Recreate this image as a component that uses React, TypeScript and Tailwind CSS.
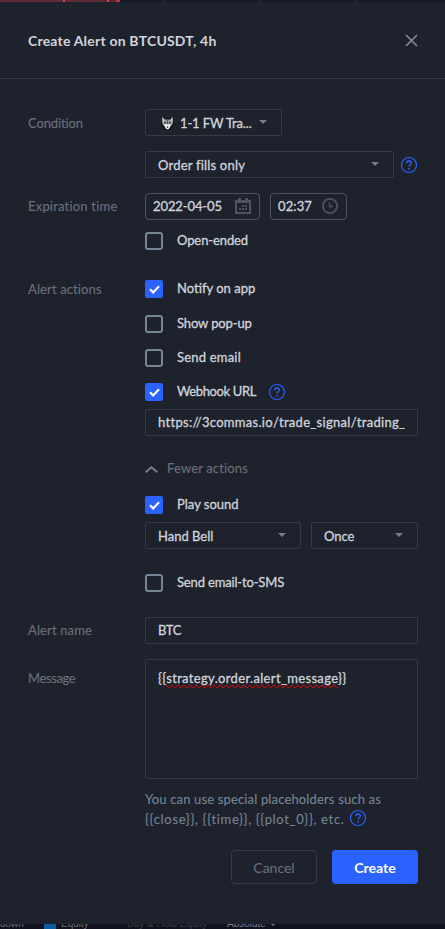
import type { ReactNode } from "react";

function Help({ className = "" }: { className?: string }) {
  return (
    <svg className={`h-4 w-4 shrink-0 overflow-visible ${className}`} viewBox="0 0 16 16" fill="none" stroke="#2962ff">
      <circle cx="8" cy="8" r="7.5" strokeWidth="1.2" />
      <path d="M5.6 6.3C5.6 4.9 6.6 4 8 4s2.4.9 2.4 2.1C10.4 7.7 8 7.8 8 9.7" strokeWidth="1.3" />
      <path d="M8 11v1.5" strokeWidth="1.6" />
    </svg>
  );
}

function Caret({ className = "" }: { className?: string }) {
  return (
    <svg className={`ml-auto h-1 w-2 shrink-0 ${className}`} viewBox="0 0 8 4">
      <path d="M0 0h8L4 4z" fill="#787b86" />
    </svg>
  );
}

function Check({ on = false, className = "", children }: { on?: boolean; className?: string; children: ReactNode }) {
  return (
    <div className={`flex h-[18px] items-center ${className}`}>
      {on ? (
        <span className="flex h-[18px] w-[18px] shrink-0 items-center justify-center rounded-[2px] bg-[#2962ff]">
          <svg className="h-[9px] w-[11px]" viewBox="0 0 11 9" fill="none" stroke="#fff" strokeWidth="2.2">
            <path d="M1 4.2l3.2 3.2L10 1.2" />
          </svg>
        </span>
      ) : (
        <span className="h-[18px] w-[18px] shrink-0 rounded-[3px] border-2 border-[#758696]" />
      )}
      <span className="ml-[14px] flex items-center whitespace-nowrap">{children}</span>
    </div>
  );
}

function Row({ label, className = "", children }: { label?: ReactNode; className?: string; children: ReactNode }) {
  return (
    <div className={`flex ${className}`}>
      <div className="w-[117px] shrink-0 leading-[27px] text-[#6c707b] [-webkit-text-stroke:0.1px]">{label}</div>
      <div className="w-[273px] shrink-0">{children}</div>
    </div>
  );
}

function Wolf() {
  return (
    <svg className="-mt-px mr-[6px] h-[14px] w-[13px] shrink-0" viewBox="0 0 13 14">
      <path d="M.6 0L4.200 2.600h4.600L12.400 0l.6 5-.4 3 .4 1.500-2.600 1.500-1.600 3H4.200L2.600 11 0 9.500 .4 8 0 5z" fill="#08090c" />
      <path d="M1 .6L4 3.600h5L12 .6l.2 4.900-.8 3.300L8.500 10h-4L1.600 8.800.8 5.500z" fill="#97999c" />
      <path d="M1.800 2.200l1.700 2L2.300 5.800zM11.200 2.200l-1.700 2 1.200 1.600z" fill="#e0d4d4" />
      <path d="M6 4h1v4H6z" fill="#5c5e62" />
      <path d="M2.500 9L5 8l1.500.7L8 8l2.500 1L9 11l-1.200 2.300H5.200L4 11z" fill="#f2f2f4" />
      <path d="M3.300 6l2 .6-.3 1-1.300-.4zM9.700 6l-2 .6.3 1 1.300-.4z" fill="#15171b" />
      <path d="M5.800 10.400h1.400v.8l-.7.7-.7-.7z" fill="#111" />
    </svg>
  );
}

const box = "flex h-[27px] items-center overflow-hidden whitespace-nowrap rounded-[2px] border border-[#363a45]";

export default function App() {
  return (
    <div className="flex h-[929px] w-[445px] flex-col overflow-hidden bg-[#131722] font-['Lato','Noto_Sans',sans-serif] text-[13px] text-[#d1d4dc] [-webkit-text-stroke:0.3px]">
      <div className="flex h-[2px] shrink-0 bg-[#161a25]">
        <div className="flex h-full w-[120px] bg-[#5d2a35]">
          <span className="ml-[63px] w-[2px] bg-[#c14b49]" />
          <span className="ml-[42px] w-[2px] bg-[#c14b49]" />
          <span className="ml-auto w-[4px] bg-[#b0393e]" />
        </div>
        <span className="ml-[43px] w-px bg-[#2a2e39]" />
        <span className="ml-[96px] w-px bg-[#2a2e39]" />
        <span className="ml-[95px] w-px bg-[#2a2e39]" />
      </div>

      <main className="flex h-[922px] shrink-0 flex-col bg-[#1e222d]">
        <header className="flex h-[77px] shrink-0 items-center justify-between border-b border-[#363a45] pl-7 pr-[28px]">
          <h1 className="pt-px text-[14px] font-bold tracking-[0.2px] [-webkit-text-stroke:0px]">Create Alert on BTCUSDT, 4h</h1>
          <svg className="h-[11px] w-[11px] overflow-visible" viewBox="0 0 11 11" stroke="#868993" strokeWidth="1.7">
            <path d="M0 0l11 11M11 0L0 11" />
          </svg>
        </header>

        <div className="flex flex-col pl-7 pt-[30px]">
          <Row label={<div className="pt-px tracking-[-0.13px]">Condition</div>}>
            <div className={`${box} w-[137px] pl-[15px] pr-[14px] pt-[2px]`}>
              <Wolf />
              <span className="tracking-[-0.13px]">1-1 FW Tra...</span>
              <Caret className="-mt-1" />
            </div>
            <div className="mt-[15px] flex items-center">
              <div className={`${box} w-[249px] pl-3 pr-[14px] pt-[2px]`}>
                <span className="tracking-[0.2px]">Order fills only</span>
                <Caret className="-mt-1" />
              </div>
              <Help className="ml-[7px]" />
            </div>
          </Row>

          <Row className="mt-[14px]" label={<div className="pt-px tracking-[0.2px]">Expiration time</div>}>
            <div className="flex gap-[10px] pt-px">
              <div className="flex h-[27px] w-[115px] items-center rounded-[4px] border border-[#50535e] pl-[7px] pr-2">
                <span className="tracking-[-0.1px]">2022-04-05</span>
                <svg className="-mt-px ml-auto h-4 w-4" viewBox="0 0 16 16" fill="#50535e">
                  <path fillRule="evenodd" d="M0 2h3V0h3v2h4V0h3v2h3v14H0zM2 5v9h12V5z" />
                  <path d="M7 7h2v2H7zM10 7h2v2h-2zM4 10h2v2H4zM7 10h2v2H7zM10 10h2v2h-2z" />
                </svg>
              </div>
              <div className="flex h-[27px] w-[77px] items-center rounded-[4px] border border-[#50535e] pl-[7px] pr-2">
                <span className="tracking-[0.1px]">02:37</span>
                <svg className="-mt-px ml-auto h-4 w-4" viewBox="0 0 16 16" fill="none" stroke="#50535e" strokeWidth="1.8">
                  <circle cx="8" cy="8" r="7.1" />
                  <path d="M7.500 4.500v4H11" strokeWidth="1.4" />
                </svg>
              </div>
            </div>
            <Check className="mt-3"><span className="tracking-[-0.1px]">Open-ended</span></Check>
          </Row>

          <Row className="mt-[26px]" label={<span className="tracking-[0.12px]">Alert actions</span>}>
            <Check on className="mt-1">Notify on app</Check>
            <Check className="mt-[17px]"><span className="tracking-[-0.12px]">Show pop-up</span></Check>
            <Check className="mt-4"><span className="tracking-[0.2px]">Send email</span></Check>
            <Check on className="mt-4">
              <span className="tracking-[-0.38px]">Webhook URL</span>
              <Help className="ml-[13px]" />
            </Check>
            <div className={`${box} mt-2 px-3`}>
              <span className="overflow-hidden tracking-[0.3px]">https://3commas.io/trade_signal/trading_</span>
            </div>
            <div className="mt-[24px] flex h-[18px] items-center text-[#6c707b] [-webkit-text-stroke:0.1px]">
              <svg className="h-[7px] w-[13px]" viewBox="0 0 13 7" fill="none" stroke="#787b86" strokeWidth="2">
                <path d="M.7 6.300L6.500 1.200l5.800 5.100" />
              </svg>
              <span className="ml-[9px] tracking-[0.15px]">Fewer actions</span>
            </div>
            <Check on className="mt-[18px]">Play sound</Check>
            <div className="mt-2 flex gap-[10px]">
              <div className={`${box} w-[156px] pl-3 pr-[14px] pt-[2px]`}>Hand Bell<Caret className="-mt-1" /></div>
              <div className={`${box} w-[107px] pl-3 pr-[14px] pt-[2px]`}>Once<Caret className="-mt-1" /></div>
            </div>
            <Check className="mt-[25px]"><span className="tracking-[-0.16px]">Send email-to-SMS</span></Check>
          </Row>

          <Row className="mt-[25px]" label={<span className="tracking-[0.13px]">Alert name</span>}>
            <div className={`${box} px-3 tracking-[-0.4px]`}>BTC</div>
          </Row>

          <Row className="mt-[15px]" label={<div className="mt-[6px] tracking-[-0.4px]">Message</div>}>
            <div className="h-[120px] rounded-[2px] border border-[#363a45] px-3 pt-2 leading-5 tracking-[0.34px]">
              {"{{"}
              <span className="[text-decoration-line:spelling-error]">strategy.order.alert_message</span>
              {"}}"}
            </div>
            <div className="mt-[10px] whitespace-nowrap leading-5 text-[#758696] [-webkit-text-stroke:0.1px]">
              <div className="tracking-[0.15px]">You can use special placeholders such as</div>
              <div className="flex items-center tracking-[0.66px]">
                {"{{close}}, {{time}}, {{plot_0}}, etc."}
                <Help className="-mt-[3px] ml-[6px]" />
              </div>
            </div>
          </Row>

          <div className="mt-[21px] flex justify-end gap-[15px] pr-[27px] text-[14px] [-webkit-text-stroke:0px]">
            <button className="h-[34px] w-[86px] rounded-[4px] border border-[#363a45] text-[#6c707b]">Cancel</button>
            <button className="h-[34px] w-[86px] rounded-[4px] bg-[#2962ff] font-bold text-white">Create</button>
          </div>
        </div>
      </main>

      <footer className="flex h-[5px] shrink-0 overflow-hidden bg-[#10121e] font-['Liberation_Sans',sans-serif] text-[10px] leading-[14px] text-[#6e717c] [-webkit-text-stroke:0px]">
        <span className="-mt-[7px] w-[44px] shrink-0">down</span>
        <span className="h-[5px] w-[12px] shrink-0 bg-[#0b5ca0]" />
        <span className="-mt-[7px] ml-[5px] w-[66px] shrink-0">Equity</span>
        <span className="-mt-[7px] w-[100px] shrink-0 whitespace-nowrap text-[#3c3f4b]">Buy &amp; Hold Equity</span>
        <span className="-mt-[7px] w-[42px] shrink-0 text-[#7d808b]">Absolute</span>
        <svg className="ml-[2px] h-[2px] w-1" viewBox="0 0 4 2"><path d="M0 0h4L2 2z" fill="#787b86" /></svg>
      </footer>
    </div>
  );
}
